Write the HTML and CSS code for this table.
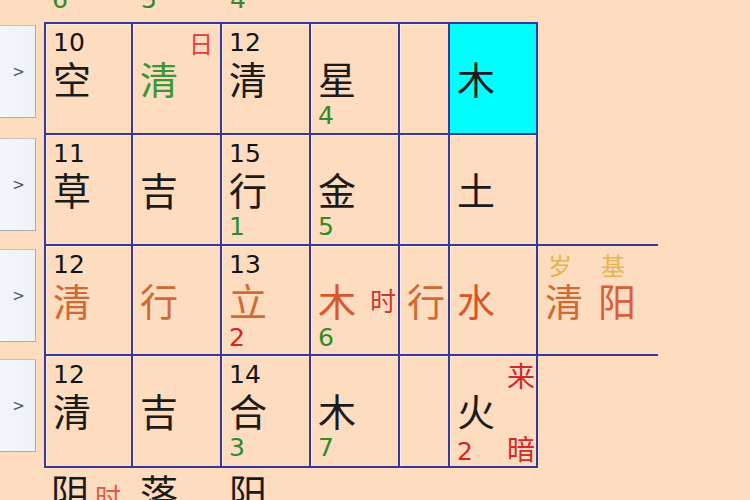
FILE: index.html
```html
<!DOCTYPE html>
<html lang="zh">
<head>
<meta charset="utf-8">
<title>盘</title>
<link rel="stylesheet" href="styles.css">
</head>
<body>
<div class="sheet">
  <!-- header row -->
  <div class="hd"></div>
  <div class="hd"><span class="g">6</span></div>
  <div class="hd"><span class="g">5</span></div>
  <div class="hd"><span class="g">4</span></div>
  <div class="hd"></div>
  <div class="hd"></div>
  <div class="hd"></div>
  <div class="hd"></div>

  <!-- row 1 -->
  <div class="side"><button class="btn">&gt;</button></div>
  <div class="cell c1 r1">
    <div class="l1"><span class="num">10</span></div>
    <div class="l2"><span class="ch">空</span></div>
    <div class="l3"></div>
  </div>
  <div class="cell r1">
    <div class="l1"><span class="num"></span><span class="tag red-l">日</span></div>
    <div class="l2"><span class="ch green">清</span></div>
    <div class="l3"></div>
  </div>
  <div class="cell r1">
    <div class="l1"><span class="num">12</span></div>
    <div class="l2"><span class="ch">清</span></div>
    <div class="l3"></div>
  </div>
  <div class="cell r1">
    <div class="l1"></div>
    <div class="l2"><span class="ch">星</span></div>
    <div class="l3"><span class="g">4</span></div>
  </div>
  <div class="cell r1"></div>
  <div class="cell r1 cyan">
    <div class="l1"></div>
    <div class="l2"><span class="ch">木</span></div>
    <div class="l3"></div>
  </div>
  <div class="ext"></div>

  <!-- row 2 -->
  <div class="side"><button class="btn">&gt;</button></div>
  <div class="cell c1">
    <div class="l1"><span class="num">11</span></div>
    <div class="l2"><span class="ch">草</span></div>
    <div class="l3"></div>
  </div>
  <div class="cell">
    <div class="l1"></div>
    <div class="l2"><span class="ch">吉</span></div>
    <div class="l3"></div>
  </div>
  <div class="cell">
    <div class="l1"><span class="num">15</span></div>
    <div class="l2"><span class="ch">行</span></div>
    <div class="l3"><span class="g">1</span></div>
  </div>
  <div class="cell">
    <div class="l1"></div>
    <div class="l2"><span class="ch">金</span></div>
    <div class="l3"><span class="g">5</span></div>
  </div>
  <div class="cell"></div>
  <div class="cell">
    <div class="l1"></div>
    <div class="l2"><span class="ch">土</span></div>
    <div class="l3"></div>
  </div>
  <div class="ext lined"></div>

  <!-- row 3 -->
  <div class="side"><button class="btn">&gt;</button></div>
  <div class="cell c1">
    <div class="l1"><span class="num">12</span></div>
    <div class="l2"><span class="ch rust">清</span></div>
    <div class="l3"></div>
  </div>
  <div class="cell">
    <div class="l1"></div>
    <div class="l2"><span class="ch rust">行</span></div>
    <div class="l3"></div>
  </div>
  <div class="cell">
    <div class="l1"><span class="num">13</span></div>
    <div class="l2"><span class="ch rust">立</span></div>
    <div class="l3"><span class="r">2</span></div>
  </div>
  <div class="cell tight">
    <div class="l1"></div>
    <div class="l2"><span class="ch orange">木</span><span class="side-tag">时</span></div>
    <div class="l3"><span class="g">6</span></div>
  </div>
  <div class="cell">
    <div class="l1"></div>
    <div class="l2"><span class="ch rust">行</span></div>
    <div class="l3"></div>
  </div>
  <div class="cell">
    <div class="l1"></div>
    <div class="l2"><span class="ch orange">水</span></div>
    <div class="l3"></div>
  </div>
  <div class="ext lined">
    <div class="pair">
      <div class="col"><span class="mini">岁</span><span class="ch rust">清</span></div>
      <div class="col"><span class="mini">基</span><span class="ch brick">阳</span></div>
    </div>
  </div>

  <!-- row 4 -->
  <div class="side"><button class="btn">&gt;</button></div>
  <div class="cell c1">
    <div class="l1"><span class="num">12</span></div>
    <div class="l2"><span class="ch">清</span></div>
    <div class="l3"></div>
  </div>
  <div class="cell">
    <div class="l1"></div>
    <div class="l2"><span class="ch">吉</span></div>
    <div class="l3"></div>
  </div>
  <div class="cell">
    <div class="l1"><span class="num">14</span></div>
    <div class="l2"><span class="ch">合</span></div>
    <div class="l3"><span class="g">3</span></div>
  </div>
  <div class="cell">
    <div class="l1"></div>
    <div class="l2"><span class="ch">木</span></div>
    <div class="l3"><span class="g">7</span></div>
  </div>
  <div class="cell"></div>
  <div class="cell flush">
    <div class="l1"><span class="num"></span><span class="tag red">来</span></div>
    <div class="l2"><span class="ch">火</span></div>
    <div class="l3"><span class="r">2</span><span class="tag red">暗</span></div>
  </div>
  <div class="ext"></div>

  <!-- footer row -->
  <div class="ft"></div>
  <div class="ft"><span class="ch">阴</span><span class="ft-tag">时</span></div>
  <div class="ft"><span class="ch">落</span></div>
  <div class="ft"><span class="ch">阳</span></div>
  <div class="ft"></div>
  <div class="ft"></div>
  <div class="ft"></div>
  <div class="ft"></div>
</div>
</body>
</html>
```
FILE: styles.css
```css
:root {
  --line: #38389a;
  --bg: #fddcbf;
}

html, body {
  margin: 0;
  padding: 0;
  background: var(--bg);
  overflow: hidden;
}

body {
  width: 750px;
  height: 500px;
  font-family: "DejaVu Sans", "Noto Sans CJK SC", sans-serif;
  color: #1b1b1b;
}

.sheet {
  display: grid;
  grid-template-columns: 44px 89px 89px 89px 89px 50px 88px 120px;
  grid-template-rows: 22px 113px 111px 110px 112px 40px;
}

/* header row (partially cut off at the top) */
.hd {
  display: flex;
  align-items: flex-end;
  padding: 0 0 10px 8px;
  font-size: 25px;
  line-height: 24px;
  overflow: visible;
}

/* left buttons */
.side {
  display: flex;
  flex-direction: column;
}

.btn {
  width: 36px;
  height: 93px;
  margin-top: 3px;
  padding: 0 0 0 2px;
  border: 1px solid #c9c0b8;
  border-left: none;
  border-right-color: #b3aca6;
  border-bottom-color: #b3aca6;
  background: linear-gradient(to right, #f3f6fa, #eef2f7);
  color: #4e5564;
  font-family: "DejaVu Sans", sans-serif;
  font-size: 15px;
  text-align: center;
}

/* grid cells */
.cell {
  box-sizing: border-box;
  border-right: 2px solid var(--line);
  border-bottom: 2px solid var(--line);
  padding: 4px 0 0 7px;
  box-shadow: inset 1px 1px 0 rgba(255, 255, 255, 0.45);
  display: flex;
  flex-direction: column;
}

.c1 { border-left: 2px solid var(--line); }
.r1 { border-top: 2px solid var(--line); }

.cyan {
  background: #00ffff;
  box-shadow: none;
}

.tight { padding-right: 0; }
.flush { padding-right: 0; }

.l1 {
  height: 30px;
  line-height: 30px;
  display: flex;
  justify-content: space-between;
  align-items: baseline;
  padding-right: 7px;
}

.flush .l1, .flush .l3 { padding-right: 1px; }

.l2 {
  height: 40px;
  line-height: 40px;
  display: flex;
  justify-content: space-between;
  align-items: center;
}

.l3 {
  height: 30px;
  line-height: 30px;
  margin-top: 3px;
  display: flex;
  justify-content: space-between;
  align-items: baseline;
}

.num {
  font-size: 25px;
  color: #141414;
}

.ch {
  font-family: "Noto Sans CJK SC", "DejaVu Sans", sans-serif;
  font-size: 38px;
  font-weight: 400;
}

.tag {
  font-family: "Noto Sans CJK SC", sans-serif;
  font-size: 28px;
}

.side-tag {
  font-family: "Noto Sans CJK SC", sans-serif;
  font-size: 26px;
  color: #cc3a2c;
  margin-right: 2px;
}

.g {
  font-size: 25px;
  color: #2f8a2a;
}

.r {
  font-size: 25px;
  color: #d42424;
}

.green { color: #3a9636; }
.rust { color: #cf6a36; }
.orange { color: #d9552a; }
.brick { color: #d5603c; }
.red { color: #d22a2a; }
.red-l { color: #e43c3c; font-size: 24px; }

/* right extension column */
.ext {
  box-sizing: border-box;
}

.ext.lined {
  border-bottom: 2px solid var(--line);
}

.pair {
  display: flex;
  gap: 15px;
  padding: 4px 0 0 7px;
}

.pair .col {
  width: 38px;
  display: flex;
  flex-direction: column;
}

.mini {
  font-family: "Noto Sans CJK SC", sans-serif;
  font-size: 24px;
  line-height: 30px;
  height: 30px;
  padding-left: 3px;
  color: #e6b44c;
}

.pair .ch {
  line-height: 40px;
  height: 40px;
}

/* footer row (cut off at bottom) */
.ft {
  padding: 3px 0 0 7px;
  line-height: 40px;
  display: flex;
  align-items: baseline;
  gap: 6px;
  white-space: nowrap;
}

.ft-tag {
  font-family: "Noto Sans CJK SC", sans-serif;
  font-size: 26px;
  color: #dc5a4a;
}
```
